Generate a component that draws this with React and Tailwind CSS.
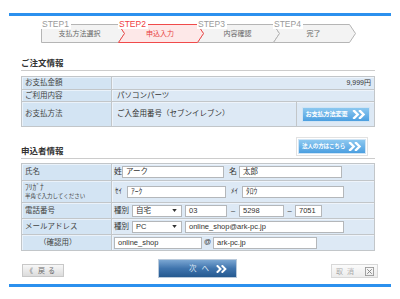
import React from 'react';

const steps = [
  { label: 'STEP1', name: '支払方法選択', width: 'w-[77px]', pad: 'pl-0', active: false },
  { label: 'STEP2', name: '申込入力', width: 'w-[79px]', pad: 'pl-[5px]', active: true },
  { label: 'STEP3', name: '内容確認', width: 'w-[76px]', pad: 'pl-[5px]', active: false },
  { label: 'STEP4', name: '完了', width: 'w-[76px]', pad: 'pl-[5px]', active: false },
];

const Chevrons = ({ className = 'h-[9px] w-[15px]' }) => (
  <svg viewBox="0 0 16 10" className={className}>
    <path d="M2 1l4 4-4 4M8.5 1l4 4-4 4" fill="none" stroke="#fff" strokeWidth="2.6" strokeLinecap="square" />
  </svg>
);

const StepBar = () => (
  <div className="relative ml-[41px] mt-[3px] h-[25px] w-[320px]">
    {/* chevron outlines */}
    <svg className="absolute inset-0" width="320" height="25" viewBox="0 0 320 25">
      <path d="M0.5 5.5H77.5L83.5 14.5L77.5 23.5H0.5Z" fill="#f3f3f3" stroke="#b5b5b5" />
      <path d="M156.5 5.5H232.5L238.5 14.5L232.5 23.5H156.5L162.5 14.5Z" fill="#f3f3f3" stroke="#b5b5b5" />
      <path d="M232.5 5.5H308.5L314.5 14.5L308.5 23.5H232.5L238.5 14.5Z" fill="#f3f3f3" stroke="#b5b5b5" />
      <path d="M77.5 5.5H156.5L162.5 14.5L156.5 23.5H77.5L83.5 14.5Z" fill="#fde8e8" stroke="#f04a4a" />
    </svg>
    <div className="relative flex">
      {steps.map((s) => (
        <div key={s.label} className={`${s.width} flex flex-col`}>
          <span
            className={`h-[10px] w-fit bg-white pl-px pr-[2px] font-['Liberation_Sans',sans-serif] text-[8.5px] leading-[10px] ${
              s.active ? 'text-[#f04040]' : 'text-[#9a9a9a]'
            }`}
          >
            {s.label}
          </span>
          <span
            className={`${s.pad} h-[10px] text-center text-[7px] leading-[10px] ${
              s.active ? 'text-[#e83c3c]' : 'text-[#666]'
            }`}
          >
            {s.name}
          </span>
        </div>
      ))}
    </div>
  </div>
);

const BlueButton = ({ children, textClass = 'text-[6.2px]' }) => (
  <div className="flex h-[15px] w-[68px] items-center justify-between border border-[#cfe4f5] bg-gradient-to-b from-[#8cc8f0] to-[#4b9fe0] pl-[3px] pr-[2px]">
    <span className={`${textClass} whitespace-nowrap font-bold leading-none tracking-[-0.2px] text-white`}>{children}</span>
    <Chevrons />
  </div>
);

const Input = ({ w, value }) => (
  <div className={`${w} flex h-[12px] items-center border border-[#b4b7ba] bg-white px-[3px] text-[7.5px] leading-none text-[#333]`}>
    {value}
  </div>
);

const Select = ({ value }) => (
  <div className="flex h-[12px] w-[50px] items-center justify-between border border-[#b4b7ba] bg-white pl-[3px] pr-[4px] text-[7.5px] leading-none text-[#333]">
    <span>{value}</span>
    <svg viewBox="0 0 6 4" className="h-[3px] w-[5px]">
      <path d="M0 0h6L3 4z" fill="#333" />
    </svg>
  </div>
);

const Row = ({ label, h, first, children, labelClass = 'pl-[3px]' }) => (
  <div className={`flex ${h} ${first ? '' : 'border-t border-[#c2c6c9]'}`}>
    <div className={`flex w-[90px] shrink-0 items-center border-r border-[#c2c6c9] bg-[#d3e4f3] shadow-[inset_1px_1px_0_#eaf2fa] text-[7.5px] text-[#444] ${labelClass}`}>
      {label}
    </div>
    <div className="flex flex-1 items-center bg-[#dde9f5] shadow-[inset_1px_1px_0_#eef4fb] text-[7.5px] text-[#333]">
      {children}
    </div>
  </div>
);

export default function App() {
  return (
    <div className="h-[299px] w-[400px] overflow-hidden bg-white font-['Liberation_Sans','Noto_Sans_CJK_JP',sans-serif] text-[#333]">
      <div className="px-[9px] pt-[13px]">
        <div className="h-[3px] bg-[#2b90ee]" />
      </div>

      <StepBar />

      {/* ご注文情報 */}
      <div className="mx-[21px] mt-[14px] w-[354px]">
        <div className="border-b border-[#cccccc] pb-[2px] text-[8.5px] font-bold leading-[10px] text-[#333]">ご注文情報</div>
        <div className="mt-[5px] border border-[#c2c6c9]">
          <Row label="お支払金額" h="h-[12px]" first>
            <span className="ml-auto pr-[3px] text-[7px]">9,999円</span>
          </Row>
          <Row label="ご利用内容" h="h-[12px]">
            <span className="pl-[5px]">パソコンパーツ</span>
          </Row>
          <Row label="お支払方法" h="h-[25px]">
            <span className="flex-1 pl-[5px]">ご入金用番号（セブンイレブン）</span>
            <div className="flex h-full w-[78px] items-center justify-center border-l border-[#c2c6c9]">
              <BlueButton>お支払方法変更</BlueButton>
            </div>
          </Row>
        </div>
      </div>

      {/* 申込者情報 */}
      <div className="mx-[21px] mt-[10px] w-[354px]">
        <div className="flex items-end justify-between border-b border-[#cccccc] pb-[2px]">
          <span className="text-[8.5px] font-bold leading-[10px] text-[#333]">申込者情報</span>
          <div className="mr-[7px] border border-[#e2e2e2] p-px">
            <BlueButton textClass="text-[5.6px]">法人の方はこちら</BlueButton>
          </div>
        </div>
        <div className="mt-[4px] border border-[#c2c6c9]">
          <Row label="氏名" h="h-[16px]" first>
            <span className="w-[10px] pl-[2px] text-[8px]">姓</span>
            <Input w="w-[102px]" value="アーク" />
            <span className="ml-[5px] w-[10px] text-[8px]">名</span>
            <Input w="w-[103px]" value="太郎" />
          </Row>
          <Row
            label={
              <div className="flex flex-col">
                <span className="text-[7.5px] leading-[9px]">ﾌﾘｶﾞﾅ</span>
                <span className="text-[5.5px] leading-[8px]">半角で入力してください</span>
              </div>
            }
            h="h-[22px]"
          >
            <span className="w-[15px] pl-[3px] text-[7px]">ｾｲ</span>
            <Input w="w-[99px]" value="ｱｰｸ" />
            <span className="ml-[5px] w-[11px] text-[7px]">ﾒｲ</span>
            <Input w="w-[102px]" value="ﾀﾛｳ" />
          </Row>
          <Row label="電話番号" h="h-[16px]">
            <span className="w-[20px] pl-[2px]">種別</span>
            <Select value="自宅" />
            <div className="ml-[3px]">
              <Input w="w-[42px]" value="03" />
            </div>
            <span className="w-[12px] text-center">–</span>
            <Input w="w-[45px]" value="5298" />
            <span className="w-[11px] text-center">–</span>
            <Input w="w-[27px]" value="7051" />
          </Row>
          <Row label="メールアドレス" h="h-[16px]">
            <span className="w-[20px] pl-[2px]">種別</span>
            <Select value="PC" />
            <div className="ml-[3px]">
              <Input w="w-[159px]" value="online_shop@ark-pc.jp" />
            </div>
          </Row>
          <Row label="（確認用）" h="h-[16px]" labelClass="pl-[17px]">
            <div className="pl-[2px]">
              <Input w="w-[88px]" value="online_shop" />
            </div>
            <span className="w-[11px] text-center text-[7px]">@</span>
            <Input w="w-[104px]" value="ark-pc.jp" />
          </Row>
        </div>
      </div>

      {/* buttons */}
      <div className="mx-[22px] mt-[8px] flex h-[19px] items-start">
        <div className="mt-[5px] flex h-[13px] w-[42px] items-center gap-[5px] border border-[#c8c8c8] bg-gradient-to-b from-[#f7f7f7] to-[#dcdcdc] pl-[3px] text-[7px] leading-none text-[#6a6a6a]">
          <span>《</span>
          <span className="tracking-[3px]">戻る</span>
        </div>
        <div className="ml-[94px] flex h-[19px] w-[79px] items-center border border-[#b9c9da] bg-gradient-to-b from-[#7aa6d2] via-[#3f74ad] to-[#245990] pl-[30px] text-[7.5px] leading-none text-[#dbe6f2]">
          <span className="tracking-[5px]">次へ</span>
          <span className="ml-auto mr-[8px]">
            <Chevrons className="h-[8px] w-[12px]" />
          </span>
        </div>
        <div className="ml-auto mt-[5px] flex h-[14px] w-[47px] items-center border border-[#d8d8d8] bg-gradient-to-b from-[#fbfbfb] to-[#ececec] pl-[4px] text-[7px] leading-none text-[#aaaaaa]">
          <span className="tracking-[4px]">取消</span>
          <svg viewBox="0 0 10 10" className="ml-auto mr-[3px] h-[9px] w-[9px]">
            <rect x="0.5" y="0.5" width="9" height="9" fill="none" stroke="#999" />
            <path d="M2.5 2.5l5 5M7.5 2.5l-5 5" stroke="#888" strokeWidth="1.1" />
          </svg>
        </div>
      </div>

      <div className="px-[9px] pt-[6px]">
        <div className="h-[3px] bg-[#2b90ee]" />
      </div>
    </div>
  );
}
